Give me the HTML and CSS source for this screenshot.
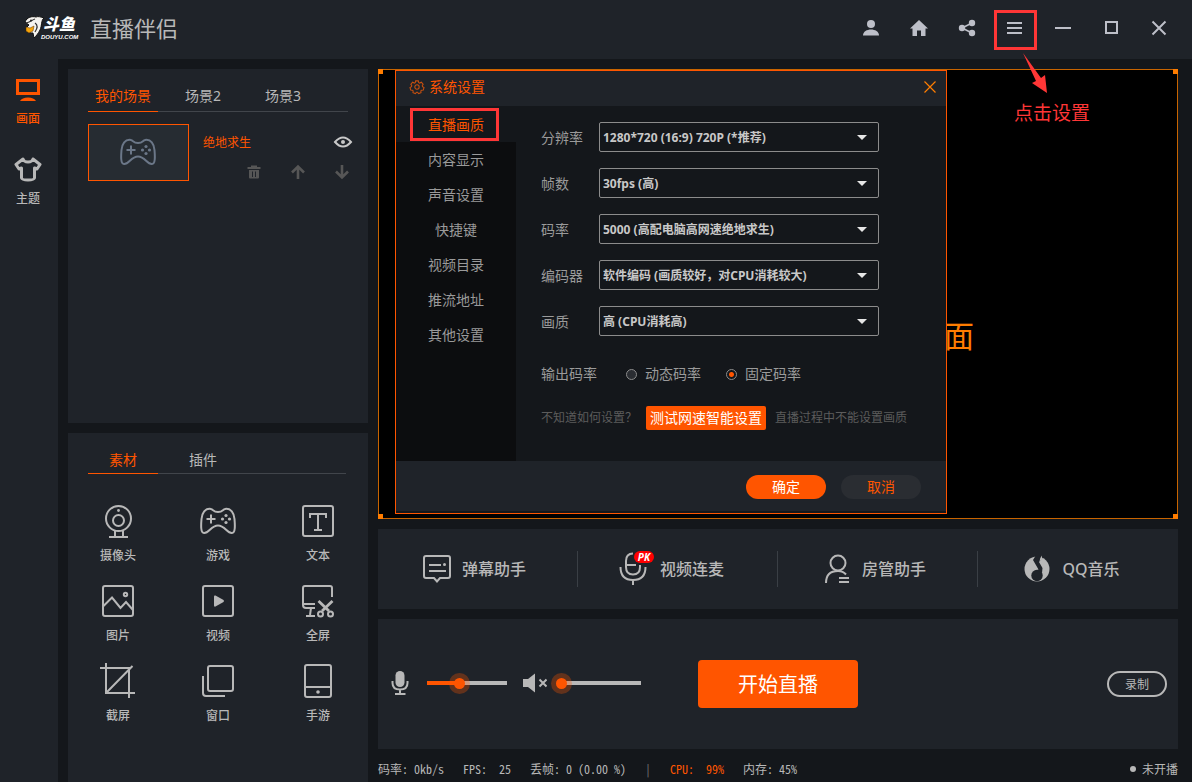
FILE: index.html
```html
<!DOCTYPE html>
<html lang="zh-CN">
<head>
<meta charset="utf-8">
<title>直播伴侣</title>
<link rel="stylesheet" href="styles.css">
</head>
<body>
<svg class="defs" aria-hidden="true">
  <symbol id="gamepad" viewBox="0 0 36 28">
    <path d="M11 2C12.500 2 13.500 5 18 5S23.500 2 25 2C31 1 34 6 34.500 12C35 18 35.500 26 32 26C27 26.500 25 18.500 18 18.500S9 26.500 4 26C.5 26 1 18 1.500 12C2 6 5 1 11 2Z"/>
    <path d="M11 7.500v9M6.500 12h9"/>
    <g class="fill"><circle cx="26" cy="8.500" r="1.600"/><circle cx="26" cy="15.500" r="1.600"/><circle cx="22.500" cy="12" r="1.600"/><circle cx="29.500" cy="12" r="1.600"/></g>
  </symbol>
</svg>

<header class="topbar">
  <svg class="logo" viewBox="0 0 54 24" role="img" aria-label="斗鱼 DOUYU.COM">
    <path d="M1 6C3 1 8 0 12 1C14 0 17 1 20 2C17 4 18 10 16 14C14 18 12 20 10 22L9 17C4 17 1 15 2 12L5 9Z" fill="#f4f2ee" stroke="#111" stroke-width="1"/>
    <path d="M2 7C6 6 8 4 11 3M11 7c3 2 2 6 0 9" fill="none" stroke="#333" stroke-width="1.200"/>
    <circle cx="7" cy="4.500" r="1" fill="#222"/>
    <path d="M2 11l4 1 4-2-1 5-4 2-3-2z" fill="#f5a40a" stroke="#5a3000" stroke-width=".5"/>
    <text class="logo-name" x="19" y="14">斗鱼</text>
    <text class="logo-site" x="17" y="23">DOUYU.COM</text>
  </svg>
  <h1 class="title">直播伴侣</h1>
  <div class="window-tools">
    <button class="tool" aria-label="用户"><svg viewBox="0 0 18 18"><circle cx="9" cy="5" r="4"/><path d="M1 16.500C1 12.500 5 10.500 9 10.500S17 12.500 17 16.500Z"/></svg></button>
    <button class="tool" aria-label="主页"><svg viewBox="0 0 18 18"><path d="M9 1L18 9.500H15.500V17H11V11.500H7V17H2.500V9.500H0Z"/></svg></button>
    <button class="tool" aria-label="分享"><svg viewBox="0 0 18 18"><circle cx="4" cy="9" r="3.200"/><circle cx="14" cy="4" r="3.200"/><circle cx="14" cy="14" r="3.200"/><path d="M14 4L4 9L14 14" fill="none" stroke="currentColor" stroke-width="1.600"/></svg></button>
    <div class="menu-wrap">
      <button class="tool" aria-label="菜单"><svg viewBox="0 0 18 18"><path d="M1 4h15M1 9h15M1 14h15" stroke="currentColor" stroke-width="2"/></svg></button>
      <span class="mark mark-menu"></span>
      <svg class="arrow" viewBox="0 0 26 42"><path d="M1 1L19 26L23 23L25 41L10 31L14 29Z"/></svg>
      <span class="note">点击设置</span>
    </div>
    <button class="tool" aria-label="最小化"><svg viewBox="0 0 18 18"><path d="M1 9h16" stroke="currentColor" stroke-width="2"/></svg></button>
    <button class="tool" aria-label="最大化"><svg viewBox="0 0 18 18"><path d="M4 3h11v11h-11z" fill="none" stroke="currentColor" stroke-width="2"/></svg></button>
    <button class="tool" aria-label="关闭"><svg viewBox="0 0 18 18"><path d="M2.500 2.500l13 13M15.500 2.500l-13 13" stroke="currentColor" stroke-width="2"/></svg></button>
  </div>
</header>

<div class="workspace">
  <nav class="rail">
    <button class="rail-item active"><svg viewBox="0 0 28 28"><rect x="3.500" y="5.500" width="21" height="13" fill="none" stroke="currentColor" stroke-width="3"/><path d="M6 26Q8 22.500 14 22.500T22 26Z" fill="currentColor"/></svg><span>画面</span></button>
    <button class="rail-item"><svg viewBox="0 0 28 28"><path d="M9 4C10 8 18 8 19 4L26 9.500L23 14L20.500 13V23Q20 25 14 25T7.500 23V13L5 14L2 9.500Z" fill="none" stroke="currentColor" stroke-width="3" stroke-linejoin="round"/></svg><span>主题</span></button>
  </nav>

  <main class="content">
    <div class="side">
      <section class="panel scenes">
        <div class="tabs">
          <button class="tab active">我的场景</button><button class="tab">场景2</button><button class="tab">场景3</button>
        </div>
        <div class="scene">
          <div class="thumb"><svg class="pad"><use href="#gamepad"/></svg></div>
          <div class="scene-info">
            <div class="scene-head">
              <span>绝地求生</span>
              <button class="icon-btn bright" aria-label="显示"><svg viewBox="0 0 20 16"><path d="M2 7Q10-2 18 7Q10 16 2 7Z" fill="none" stroke="currentColor" stroke-width="2"/><circle cx="10" cy="7" r="2" /></svg></button>
            </div>
            <div class="scene-actions">
              <button class="icon-btn" aria-label="删除"><svg viewBox="0 0 16 16"><path d="M5 1.500h6v1.500h3.500V5h-13V3H5zM3 6h10v7.500q0 1-1 1H4q-1 0-1-1z"/><path d="M6.500 7.500v5.500M9.500 7.500v5.500" stroke="#20242a" stroke-width="1"/></svg></button>
              <button class="icon-btn" aria-label="上移"><svg viewBox="0 0 16 16"><path d="M8 15V3M2 8.500l6-6 6 6" fill="none" stroke="currentColor" stroke-width="2.600"/></svg></button>
              <button class="icon-btn" aria-label="下移"><svg viewBox="0 0 16 16"><path d="M8 1v12M2 7.500l6 6 6-6" fill="none" stroke="currentColor" stroke-width="2.600"/></svg></button>
            </div>
          </div>
        </div>
      </section>

      <section class="panel sources">
        <div class="tabs">
          <button class="tab active">素材</button><button class="tab">插件</button>
        </div>
        <div class="source-grid">
          <button class="source"><svg viewBox="0 0 36 36"><circle cx="18.500" cy="15.500" r="12.500"/><circle cx="18.500" cy="17.500" r="5.500"/><circle cx="18.500" cy="7.500" r="1.400" class="fill"/><path d="M15 28v6M23 28v6M9 34h19"/></svg><span>摄像头</span></button>
          <button class="source"><svg class="pad" viewBox="0 0 36 36"><use href="#gamepad" y="4" width="36" height="28"/></svg><span>游戏</span></button>
          <button class="source"><svg viewBox="0 0 36 36"><rect x="3" y="3" width="30" height="30" rx="2"/><path d="M10 15V11H26V15M18 11V26M14 27h8"/></svg><span>文本</span></button>
          <button class="source"><svg viewBox="0 0 36 36"><rect x="3" y="3" width="30" height="30" rx="2"/><circle cx="25.500" cy="11.500" r="1.700"/><path d="M3.500 23L12 14.500L20.500 25L26 19L33 27"/></svg><span>图片</span></button>
          <button class="source"><svg viewBox="0 0 36 36"><rect x="3" y="3" width="30" height="30" rx="2"/><path class="fill" d="M14 13.500Q14 12 15.500 12.500L23.500 17Q24.500 18 23.500 19L15.500 23.500Q14 24 14 22.500Z"/></svg><span>视频</span></button>
          <button class="source"><svg viewBox="0 0 36 36"><path d="M32 14V5Q32 3 30 3H5Q3 3 3 5V22Q3 25 6 25H15M4 21H15M11 25L10 32M6 33H15"/><path d="M18.500 18L29 28M32.500 18L22 28" stroke-width="2.800"/><circle cx="20.500" cy="31" r="2.500"/><circle cx="30.500" cy="31" r="2.500"/></svg><span>全屏</span></button>
          <button class="source"><svg viewBox="0 0 36 36"><path d="M0 5H29V35M6 0V30H35M6.500 29.500L32.500 3"/></svg><span>截屏</span></button>
          <button class="source"><svg viewBox="0 0 36 36"><rect x="8" y="3" width="25" height="25" rx="2"/><path d="M3 13V30Q3 33 6 33H25"/></svg><span>窗口</span></button>
          <button class="source"><svg viewBox="0 0 36 36"><rect x="5" y="2" width="26" height="32" rx="2"/><path d="M5 24H31"/><circle cx="18" cy="29" r="1.800" class="fill"/></svg><span>手游</span></button>
        </div>
      </section>
    </div>

    <div class="stage">
      <section class="preview">
        <i class="handle tl"></i><i class="handle tr"></i><i class="handle bl"></i><i class="handle br"></i>
        <span class="preview-text">面</span>

        <div class="dialog" role="dialog" aria-labelledby="dlg-title">
          <div class="dialog-head">
            <svg class="gear" viewBox="0 0 16 16"><path d="M6.500 1h3l.5 2 1 .5 2-1 2 2.500-1 1.500.3 1.200 1.700.8-.8 3-2 .2-.8.800.2 2-2.800 1L8.500 14h-1l-1.300 1.500-2.800-1 .2-2-.8-.8-2-.2L0 8.500l1.700-.8L2 6.500 1 5l2-2.500 2 1 1-.5z"/><circle cx="8" cy="8" r="2.500"/></svg>
            <h2 id="dlg-title">系统设置</h2>
            <button class="close" aria-label="关闭"><svg viewBox="0 0 12 12"><path d="M.5.5l11 11M11.500.5l-11 11"/></svg></button>
          </div>
          <div class="dialog-body">
            <nav class="settings-nav">
              <button class="active">直播画质<span class="mark mark-nav"></span></button>
              <button>内容显示</button>
              <button>声音设置</button>
              <button>快捷键</button>
              <button>视频目录</button>
              <button>推流地址</button>
              <button>其他设置</button>
            </nav>
            <form class="settings">
              <div class="field"><label for="res">分辨率</label><div class="select"><select id="res"><option>1280*720 (16:9) 720P (*推荐)</option></select></div></div>
              <div class="field"><label for="fps">帧数</label><div class="select"><select id="fps"><option>30fps (高)</option></select></div></div>
              <div class="field"><label for="rate">码率</label><div class="select"><select id="rate"><option>5000 (高配电脑高网速绝地求生)</option></select></div></div>
              <div class="field"><label for="enc">编码器</label><div class="select"><select id="enc"><option>软件编码 (画质较好，对CPU消耗较大)</option></select></div></div>
              <div class="field"><label for="qual">画质</label><div class="select"><select id="qual"><option>高 (CPU消耗高)</option></select></div></div>
              <div class="radios" role="radiogroup" aria-labelledby="out">
                <span class="radios-label" id="out">输出码率</span>
                <label><input type="radio" name="out">动态码率</label>
                <label><input type="radio" name="out" checked>固定码率</label>
              </div>
              <div class="tips"><span>不知道如何设置？</span><button type="button">测试网速智能设置</button><span>直播过程中不能设置画质</span></div>
            </form>
          </div>
          <div class="dialog-foot"><button class="ok">确定</button><button class="cancel">取消</button></div>
        </div>
      </section>

      <section class="panel helpers">
        <button class="helper"><svg viewBox="0 0 28 28"><path d="M3 1H25Q27 1 27 3V21Q27 23 25 23H17L14 26.500L11 23H3Q1 23 1 21V3Q1 1 3 1ZM6 10H18M6 16H23"/><circle cx="21.500" cy="9.500" r="1.500" class="fill"/></svg><span>弹幕助手</span></button>
        <button class="helper"><span class="mic-pk"><svg viewBox="0 0 28 34"><path d="M14 1.500Q7 1.500 7 9V15Q7 22.500 14 22.500T21 15V13M7 13H17M1.500 15Q1.500 28 14 28T26.500 15M14 28V33"/></svg><b>PK</b></span><span>视频连麦</span></button>
        <button class="helper"><svg viewBox="0 0 28 28"><circle cx="15" cy="8" r="7.500"/><path d="M3 28Q3 16 15 16Q20 16 23 19.500M16 23H26M16 27H26"/></svg><span>房管助手</span></button>
        <button class="helper"><svg viewBox="0 0 28 28"><circle cx="14" cy="14" r="12.500" class="fill"/><circle class="hole" cx="14" cy="20.500" r="5.700"/><path class="hole" d="M13 0L10 5L15.500 14.500L13 15.500L19 18L19.500 13L16 7L19.500 3L18.500 0Z"/><path class="fill" d="M19 .5V4.500L16.500 6.500Q16.500 3 19 .5Z"/></svg><span>QQ音乐</span></button>
      </section>

      <section class="panel controls">
        <div class="audio">
          <svg class="mic" viewBox="0 0 18 24"><rect x="4.500" y="0" width="9" height="16" rx="4.500"/><path d="M1.500 10V12Q1.500 18.500 9 18.500T16.500 12V10M9 18V23M4 23H14.500" fill="none" stroke="currentColor" stroke-width="2"/></svg>
          <input class="slider" type="range" aria-label="麦克风音量" min="0" max="100" value="39" style="--fill:40%">
          <svg class="speaker" viewBox="0 0 24 20"><path d="M0 6H5L12 .5V19.500L5 14H0Z"/><path d="M16.500 6.500l7 7M23.500 6.500l-7 7" stroke="currentColor" stroke-width="2"/></svg>
          <input class="slider speaker-slider" type="range" aria-label="扬声器音量" min="0" max="100" value="0" style="--fill:0%">
        </div>
        <button class="start">开始直播</button>
        <button class="record">录制</button>
      </section>

      <footer class="status">
        <span>码率: 0kb/s</span><span>FPS:&nbsp; 25</span><span>丢帧: 0 (0.00 %)</span><span class="bar">|</span><span class="hot">CPU:&nbsp; 99%</span><span>内存: 45%</span>
        <span class="live"><i></i>未开播</span>
      </footer>
    </div>
  </main>
</div>
</body>
</html>
```
FILE: styles.css
```css
:root {
  --bg: #14171b;
  --panel: #1f2329;
  --text: #b8b8b8;
  --orange: #ff5500;
  --red: #ff3636;
}
* { box-sizing: border-box; }
body {
  margin: 0;
  min-height: 100vh;
  display: flex;
  flex-direction: column;
  background: var(--bg);
  color: var(--text);
  font: 12px/16px "Noto Sans", "Noto Sans CJK SC", sans-serif;
}
button {
  padding: 0;
  border: 0;
  background: none;
  color: inherit;
  font: inherit;
}
h1, h2 { margin: 0; font-weight: 400; }
svg { display: block; fill: currentColor; }
.defs { position: absolute; width: 0; height: 0; }

/* title bar */
.topbar {
  display: flex;
  align-items: center;
  height: 59px;
  padding: 0 9px 4px 24px;
  background: var(--panel);
}
.logo { width: 54px; height: 24px; overflow: visible; }
.logo-name { font: italic 900 16px "Liberation Sans", "Noto Sans CJK SC", sans-serif; fill: #fff; }
.logo-site { font: italic 900 6px "Liberation Sans", sans-serif; fill: #fff; }
.title { margin-left: 12px; font-size: 22px; line-height: 30px; font-weight: 400; }
.window-tools { display: flex; align-self: flex-start; margin-left: auto; }
.tool { display: grid; place-items: center; width: 48px; height: 56px; color: #bdbfc8; }
.tool svg { width: 18px; height: 18px; }
.menu-wrap { position: relative; z-index: 5; }
.mark { position: absolute; border: 3px solid var(--red); }
.mark-menu { left: 3px; top: 10px; width: 43px; height: 40px; pointer-events: none; }
.arrow { position: absolute; left: 31px; top: 52px; width: 26px; height: 42px; fill: var(--red); }
.note {
  position: absolute;
  left: 23px;
  top: 100px;
  color: var(--red);
  font-size: 19px;
  line-height: 26px;
  white-space: nowrap;
}

.workspace { display: flex; flex: 1; }
.rail {
  display: flex;
  flex-direction: column;
  gap: 28px;
  width: 58px;
  padding: 16px 1px;
  background: var(--panel);
}
.rail-item { display: grid; justify-items: center; gap: 8px; padding-right: 2px; font-weight: 500; }
.rail-item svg { width: 28px; height: 28px; }
.rail-item.active { color: var(--orange); }

.content { display: flex; flex: 1; gap: 10px; padding: 10px 14px 0 10px; }
.panel { background: var(--panel); }
.side { display: flex; flex-direction: column; gap: 10px; width: 300px; }
.scenes { height: 354px; padding: 10px 0 0 20px; }
.sources { flex: 1; padding: 10px 0 0 20px; }
.tabs { display: flex; gap: 10px; margin-right: 20px; border-bottom: 1px solid #41454b; }
.tab { width: 70px; height: 33px; margin-bottom: -1px; padding-top: 2px; border-bottom: 1px solid transparent; font-size: 14px; line-height: 20px; }
.sources .tabs { margin-right: 22px; }
.sources .tab { height: 31px; padding-top: 4px; }
.tab.active { color: var(--orange); border-color: var(--orange); }

.scene { display: flex; gap: 14px; margin-top: 12px; }
.thumb { display: grid; place-items: center; width: 101px; height: 57px; padding: 0 2px 2px 0; border: 1px solid var(--orange); background: #262c32; color: #6b7788; }
.thumb .pad { width: 36px; height: 28px; }
.scene-info { flex: 1; padding-right: 15px; }
.scene-head { display: flex; justify-content: space-between; padding-top: 11px; color: var(--orange); }
.icon-btn { color: #565656; }
.icon-btn.bright { color: #c8c8c8; }
.icon-btn svg { width: 16px; height: 16px; }
.icon-btn.bright svg { width: 20px; }
.scene-actions { display: flex; justify-content: flex-end; gap: 28px; padding: 13px 3px 0 0; }

.pad, .source svg, .helper svg { fill: none; stroke: currentColor; stroke-width: 2; }
.fill, .source .fill, .helper .fill { fill: currentColor; stroke: none; }
.source-grid { display: grid; grid-template-columns: repeat(3, 1fr); row-gap: 19px; margin: 29px 0 0 -20px; }
.source { display: grid; justify-items: center; gap: 9px; font-weight: 500; }
.source svg { width: 36px; height: 36px; }

/* stage column */
.stage { display: flex; flex: 1; flex-direction: column; gap: 10px; min-width: 0; }
.preview { position: relative; height: 450px; border: 1px solid #c86400; background: #000; }
.handle { position: absolute; width: 5px; height: 5px; background: #ff7d00; }
.tl { left: -1px; top: -1px; }
.tr { right: -1px; top: -1px; }
.bl { left: -1px; bottom: -1px; }
.br { right: -1px; bottom: -1px; }
.preview-text { position: absolute; left: 565px; top: 246px; color: #ff7d00; font-size: 30px; line-height: 40px; }

.dialog {
  position: absolute;
  left: 16px;
  top: 0;
  width: 552px;
  padding-bottom: 2px;
  border: 1px solid var(--orange);
  background: var(--bg);
  font-size: 14px;
  line-height: 20px;
  color: #9a9a9a;
}
.dialog-head { display: flex; align-items: center; gap: 5px; height: 35px; padding: 0 10px 4px 14px; background: var(--panel); color: var(--orange); }
.dialog-head h2 { font-size: 14px; line-height: 20px; }
.gear { width: 14px; height: 14px; fill: none; stroke: #c8500f; stroke-width: 1.200; overflow: visible; }
.close { margin-left: auto; }
.close svg { width: 12px; height: 12px; stroke: #ff7d00; stroke-width: 1.200; }
.dialog-body { display: flex; height: 355px; }
.settings-nav { display: flex; flex-direction: column; width: 120px; background: #0c0d0f; }
.settings-nav button { position: relative; height: 35px; }
.settings-nav button:first-child { height: 36px; padding-top: 2px; }
.settings-nav .active { background: var(--bg); color: var(--orange); }
.mark-nav { left: 14px; top: 2px; width: 89px; height: 33px; }
.settings { flex: 1; padding: 16px 67px 0 25px; }
.field { display: flex; align-items: center; margin-bottom: 16px; }
.field label { width: 58px; padding-top: 2px; }
.select { position: relative; flex: 1; }
.select select {
  display: block;
  width: 100%;
  height: 30px;
  padding: 2px 24px 0 3px;
  appearance: none;
  border: 1px solid #8c8c8c;
  border-radius: 2px;
  background: transparent;
  color: #c8c8c8;
  font: bold 12px/16px "Noto Sans", "Noto Sans CJK SC", sans-serif;
}
.select::after {
  content: "";
  position: absolute;
  right: 12px;
  top: 13px;
  border: 5px solid transparent;
  border-top-color: #e6e6e6;
  border-bottom: 0;
  pointer-events: none;
}
.radios { display: flex; align-items: center; margin-top: 28px; }
.radios-label { width: 85px; }
.radios label { display: flex; align-items: center; gap: 8px; width: 100px; }
.radios input { appearance: none; width: 11px; height: 11px; margin: 0; border: 1px solid #8c8c8c; border-radius: 50%; background: #2a2d32; }
.radios input:checked { background: radial-gradient(circle, var(--orange) 2px, var(--bg) 3px); }
.tips { display: flex; align-items: center; gap: 9px; margin: 22px -40px 0 0; font-size: 12px; color: #5c5c5c; white-space: nowrap; }
.tips button { height: 24px; padding: 0 4px; border-radius: 2px; background: var(--orange); color: #fff; font-size: 14px; }
.dialog-foot { display: flex; justify-content: flex-end; align-items: center; gap: 15px; height: 50px; padding: 2px 25px 0 0; background: var(--panel); }
.dialog-foot button { width: 80px; height: 24px; border-radius: 12px; }
.ok { background: var(--orange); color: #fff; }
.cancel { background: #2a2d32; color: var(--orange); }

.helpers { display: grid; grid-template-columns: repeat(4, 1fr); align-items: center; height: 80px; }
.helper { display: flex; align-items: center; justify-content: center; gap: 11px; height: 36px; padding-right: 6px; font-size: 16px; line-height: 24px; font-weight: 500; border-right: 1px solid #3a3f45; }
.helper:nth-child(even) { padding-right: 12px; }
.helper:last-child { border-color: transparent; }
.helper svg { width: 28px; height: 28px; overflow: visible; }
.helper .hole { fill: var(--panel); stroke: none; }
.mic-pk { position: relative; margin-right: 2px; }
.mic-pk svg { height: 34px; }
.mic-pk b { position: absolute; left: 15px; top: -1px; width: 20px; height: 12px; border-radius: 6px; background: #f00; color: #fff; font: italic bold 10px/12px "Open Sans", sans-serif; }

.controls { display: grid; grid-template-columns: 1fr auto 1fr; align-items: center; height: 130px; padding: 0 11px; }
.audio { display: flex; align-items: center; padding: 0 0 2px 2px; }
.mic { width: 18px; height: 24px; margin-right: 18px; }
.speaker { width: 24px; height: 20px; margin: 0 9px 0 16px; }
.slider { appearance: none; width: 80px; height: 20px; margin: 0; background: none; }
.speaker-slider { width: 85px; }
.slider::-webkit-slider-runnable-track { height: 4px; background: linear-gradient(90deg, var(--orange) var(--fill), #b8b8b8 var(--fill)); }
.speaker-slider::-webkit-slider-runnable-track { background: linear-gradient(90deg, transparent 5px, #b8b8b8 5px); }
.slider::-webkit-slider-thumb { appearance: none; width: 11px; height: 11px; margin-top: -3px; border-radius: 50%; background: var(--orange); box-shadow: 0 0 0 5px rgba(255, 85, 0, 0.3); }
.start { width: 160px; height: 48px; padding-top: 2px; border-radius: 4px; background: var(--orange); color: #fff; font-size: 20px; line-height: 28px; }
.record { justify-self: end; width: 60px; height: 26px; padding-top: 2px; border: 2px solid #b8b8b8; border-radius: 13px; }

.status { display: flex; align-items: center; gap: 19px; padding-top: 2px; font-family: "Noto Sans Mono CJK SC", "Liberation Mono", monospace; white-space: nowrap; }
.bar { color: #777; }
.hot { color: var(--orange); }
.live { display: flex; align-items: center; gap: 6px; margin-left: auto; }
.live i { width: 6px; height: 6px; border-radius: 50%; background: #b8b8b8; }
```
